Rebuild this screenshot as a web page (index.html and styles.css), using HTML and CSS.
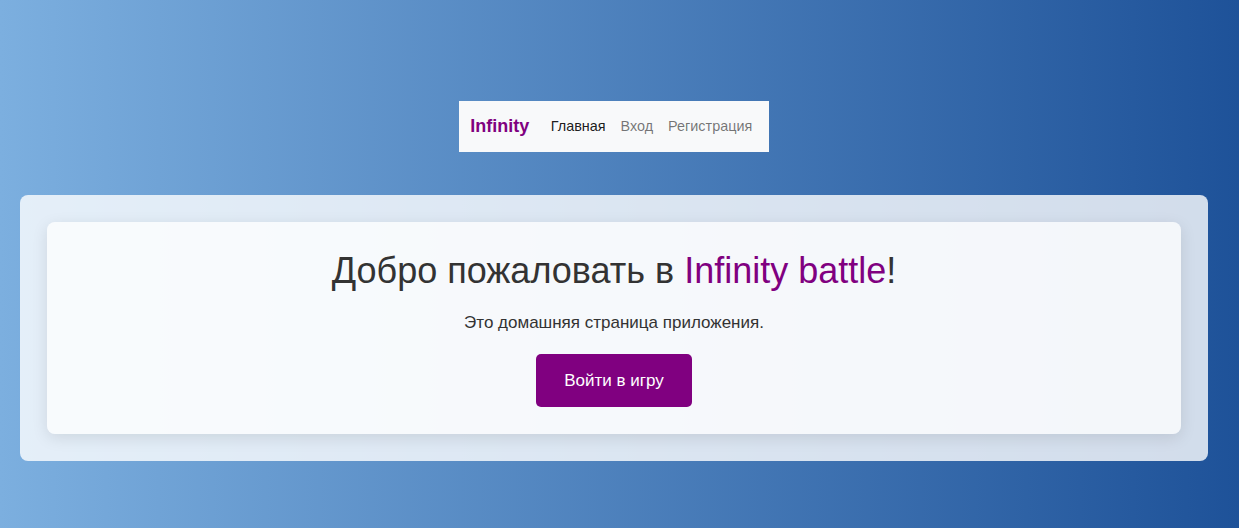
FILE: index.html
```html
<!DOCTYPE html>
<html lang="ru">
<head>
<meta charset="utf-8">
<title>Infinity battle</title>
<link rel="stylesheet" href="styles.css">
</head>
<body>
<div class="page">
  <nav class="navbar">
    <a class="brand" href="#">Infinity</a>
    <ul class="nav-links">
      <li><a class="nav-link active" href="#">Главная</a></li>
      <li><a class="nav-link" href="#">Вход</a></li>
      <li><a class="nav-link" href="#">Регистрация</a></li>
    </ul>
  </nav>
  <main class="container">
    <section class="card">
      <h1 class="title">Добро пожаловать в <span class="accent">Infinity battle</span>!</h1>
      <p class="lead">Это домашняя страница приложения.</p>
      <a class="btn" href="#">Войти в игру</a>
    </section>
  </main>
</div>
</body>
</html>
```
FILE: styles.css
```css
* { box-sizing: border-box; }
html, body { height: 100%; }
body {
  margin: 0;
  font-family: "Liberation Sans", Arial, sans-serif;
  background: linear-gradient(to right, #7cafdf, #1e5299);
  color: #333;
}
.page {
  width: 1228px;
  padding: 101px 20px 0;
  display: flex;
  flex-direction: column;
  align-items: center;
}
.navbar {
  display: flex;
  align-items: center;
  height: 51px;
  padding: 0 9px 0 11px;
  background: #f8f9fa;
}
.brand {
  font-size: 18px;
  font-weight: bold;
  color: #800080;
  text-decoration: none;
  margin-right: 14px;
}
.nav-links {
  display: flex;
  list-style: none;
  margin: 0;
  padding: 0;
}
.nav-link {
  display: block;
  padding: 7px 7.5px 9px;
  font-size: 14.4px;
  color: rgba(0, 0, 0, 0.55);
  text-decoration: none;
}
.nav-link.active { color: rgba(0, 0, 0, 0.9); }
.container {
  align-self: stretch;
  margin-top: 43px;
  padding: 27px;
  background: rgba(255, 255, 255, 0.8);
  border-radius: 8px;
}
.card {
  display: flex;
  flex-direction: column;
  align-items: center;
  padding: 27px 20px;
  background: rgba(255, 255, 255, 0.75);
  border-radius: 8px;
  box-shadow: 0 4px 16px rgba(0, 0, 0, 0.1);
  text-align: center;
}
.title {
  margin: 0 0 19px;
  font-size: 36px;
  font-weight: normal;
  line-height: 43px;
  color: #333;
}
.accent { color: #800080; }
.lead {
  margin: 0 0 19px;
  font-size: 17px;
  line-height: 24px;
  color: #333;
}
.btn {
  display: inline-block;
  padding: 14.5px 28px;
  font-size: 17px;
  line-height: 24px;
  color: #fff;
  background: #800080;
  border-radius: 5px;
  text-decoration: none;
}
```
